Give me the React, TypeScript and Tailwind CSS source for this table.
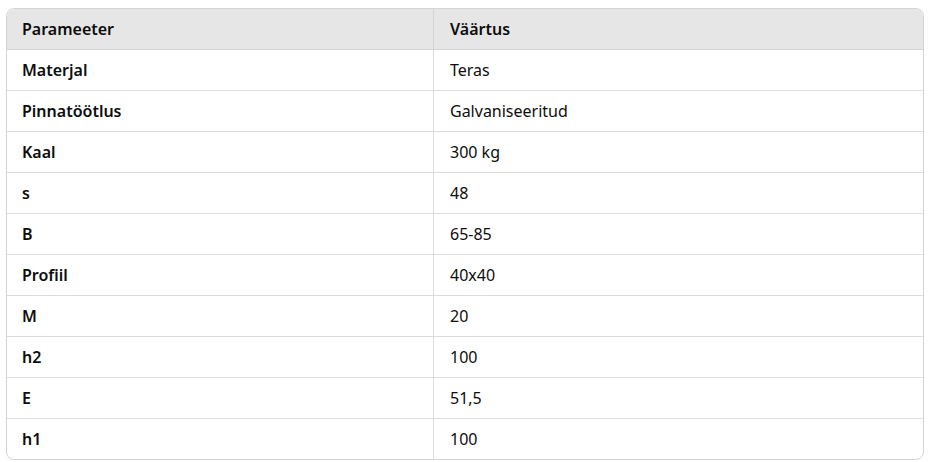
import React from 'react';

const rows: [string, string][] = [
  ['Materjal', 'Teras'],
  ['Pinnatöötlus', 'Galvaniseeritud'],
  ['Kaal', '300 kg'],
  ['s', '48'],
  ['B', '65-85'],
  ['Profiil', '40x40'],
  ['M', '20'],
  ['h2', '100'],
  ['E', '51,5'],
  ['h1', '100'],
];

const App = () => {
  return (
    <div className="min-h-screen bg-white pt-2 pl-[6px] pr-1 font-['Noto_Sans',sans-serif] text-[16px] text-[#0d0d0d]">
      <div className="w-[918px] overflow-hidden rounded-lg border border-[#d4d4d4]">
        <div className="grid grid-cols-[427px_1fr] bg-[#e6e6e6] h-[41px] border-b border-[#d4d4d4] font-semibold">
          <div className="flex items-center pl-[15px] border-r border-[#d4d4d4]">Parameeter</div>
          <div className="flex items-center pl-4">Väärtus</div>
        </div>
        {rows.map(([name, value], i) => (
          <div
            key={name}
            className={`grid grid-cols-[427px_1fr] ${i < rows.length - 1 ? 'border-b border-[#dcdcdc] h-[41px]' : 'h-[40px]'}`}
          >
            <div className="flex items-center pl-[15px] border-r border-[#dcdcdc] font-semibold">{name}</div>
            <div className="flex items-center pl-4">{value}</div>
          </div>
        ))}
      </div>
    </div>
  );
};

export default App;
